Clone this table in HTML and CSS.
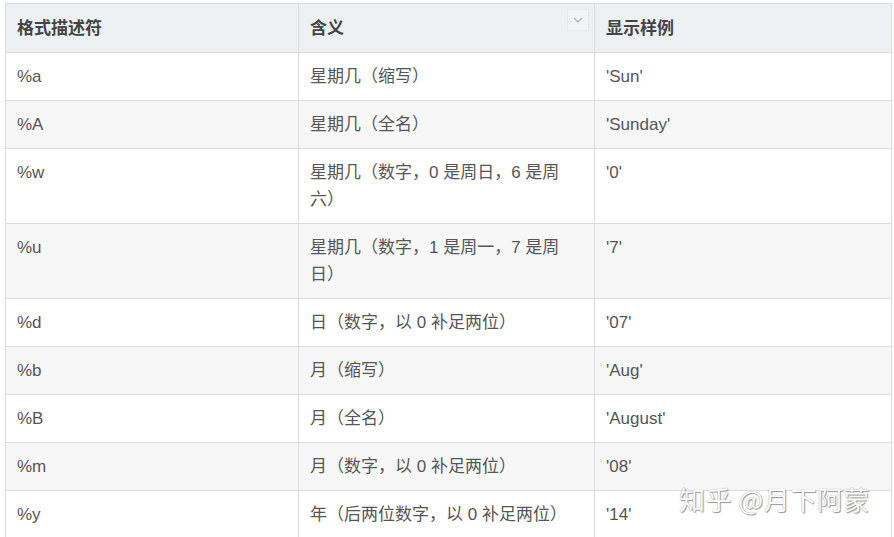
FILE: index.html
```html
<!DOCTYPE html>
<html lang="zh">
<head>
<meta charset="utf-8">
<link rel="stylesheet" href="styles.css">
</head>
<body>
<div class="page">
  <table class="fmt">
    <colgroup>
      <col class="c1"><col class="c2"><col class="c3">
    </colgroup>
    <thead>
      <tr>
        <th>格式描述符</th>
        <th class="has-menu">含义<span class="menu-btn"><svg width="10" height="6" viewBox="0 0 10 6"><path d="M1 1l4 4 4-4" fill="none" stroke="#b5b5b5" stroke-width="1.3"/></svg></span></th>
        <th>显示样例</th>
      </tr>
    </thead>
    <tbody>
      <tr><td>%a</td><td>星期几（缩写）</td><td>'Sun'</td></tr>
      <tr><td>%A</td><td>星期几（全名）</td><td>'Sunday'</td></tr>
      <tr><td>%w</td><td>星期几（数字，0 是周日，6 是周六）</td><td>'0'</td></tr>
      <tr><td>%u</td><td>星期几（数字，1 是周一，7 是周日）</td><td>'7'</td></tr>
      <tr><td>%d</td><td>日（数字，以 0 补足两位）</td><td>'07'</td></tr>
      <tr><td>%b</td><td>月（缩写）</td><td>'Aug'</td></tr>
      <tr><td>%B</td><td>月（全名）</td><td>'August'</td></tr>
      <tr><td>%m</td><td>月（数字，以 0 补足两位）</td><td>'08'</td></tr>
      <tr><td>%y</td><td>年（后两位数字，以 0 补足两位）</td><td>'14'</td></tr>
    </tbody>
  </table>
  <div class="watermark">知乎 @月下阿蒙</div>
</div>
</body>
</html>
```
FILE: styles.css
```css
html, body {
  margin: 0;
  padding: 0;
  background: #ffffff;
  overflow: hidden;
}
.page {
  position: relative;
  padding: 3px 0 0 5px;
  height: 534px;
  overflow: hidden;
  font-family: "Liberation Sans", "Noto Sans CJK SC", sans-serif;
}
.fmt {
  border-collapse: collapse;
  table-layout: fixed;
  width: 886px;
  font-size: 17px;
  color: #555;
}
.c1 { width: 293px; }
.c2 { width: 296px; }
.c3 { width: 297px; }
.fmt th, .fmt td {
  border: 1px solid #dcdcdc;
  text-align: left;
  vertical-align: top;
  line-height: 27px;
  padding: 10px 11px;
  text-spacing-trim: space-all;
}
.fmt th {
  background: #eef1f4;
  color: #444;
  font-weight: bold;
  padding: 11px 11px 10px;
}
.fmt tbody tr:nth-child(even) td {
  background: #f7f7f7;
}
.has-menu {
  position: relative;
}
.menu-btn {
  position: absolute;
  right: 5px;
  top: 5px;
  width: 22px;
  height: 22px;
  box-sizing: border-box;
  border: 1px solid #e6e8ea;
  background: #f2f4f6;
  display: flex;
  align-items: center;
  justify-content: center;
}
.watermark {
  position: absolute;
  left: 679px;
  top: 481px;
  font-family: "Noto Sans CJK SC", sans-serif;
  font-size: 26px;
  line-height: 36px;
  color: #fbfbfb;
  letter-spacing: 0.6px;
  text-shadow: 0 0 1px #8a8a8a, 1px 1px 1px #9a9a9a;
}
```
